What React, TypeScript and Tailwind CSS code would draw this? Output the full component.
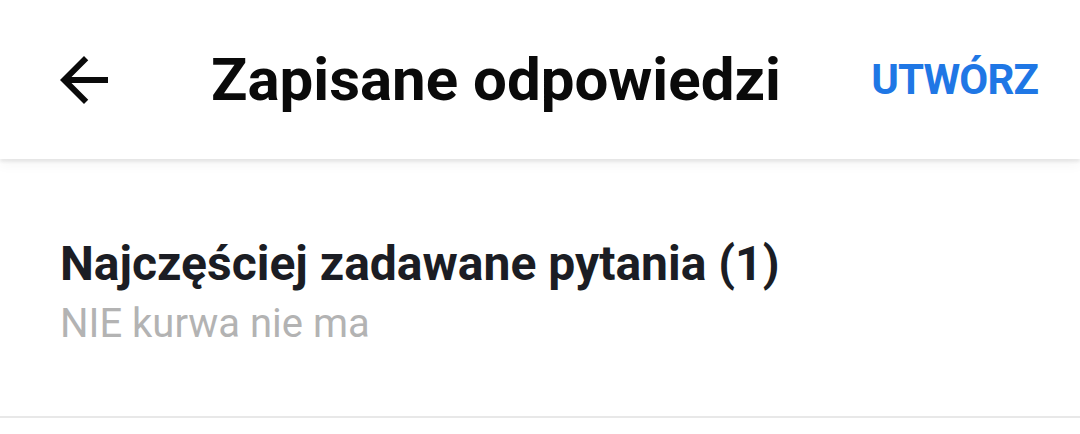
import React from "react";

const BackArrow = () => (
  <svg viewBox="0 0 24 24" className="w-[72px] h-[72px]" fill="#0a0a0a">
    <path d="M20 11H7.83l5.59-5.59L12 4l-8 8 8 8 1.41-1.41L7.83 13H20v-2z" />
  </svg>
);

const SavedReply = ({ title, preview }: { title: string; preview: string }) => (
  <li className="border-b-2 border-[#e8e8e8] pl-[60px] pt-[81px] pb-[72px]">
    <p className="text-[48px] leading-none font-bold text-[#1b1d24]">{title}</p>
    <p className="mt-[16px] text-[40px] leading-none text-[#b3b3b3]">{preview}</p>
  </li>
);

export default function App() {
  return (
    <div
      className="w-[1080px] h-[434px] bg-white overflow-hidden"
      style={{ fontFamily: "Roboto, 'Noto Sans', sans-serif" }}
    >
      <header className="relative z-10 flex items-center h-[159px] bg-white shadow-[0_3px_3px_rgba(0,0,0,0.07),0_6px_12px_rgba(0,0,0,0.04)]">
        <button className="ml-[48px] flex items-center">
          <BackArrow />
        </button>
        <h1 className="ml-[91px] text-[60px] leading-none font-bold text-[#0a0a0a]">
          Zapisane odpowiedzi
        </h1>
        <button className="ml-auto mr-[42px] text-[42px] leading-none font-bold tracking-[-0.9px] text-[#1f77e5]">
          UTWÓRZ
        </button>
      </header>
      <ul>
        <SavedReply title="Najczęściej zadawane pytania (1)" preview="NIE kurwa nie ma" />
      </ul>
    </div>
  );
}
